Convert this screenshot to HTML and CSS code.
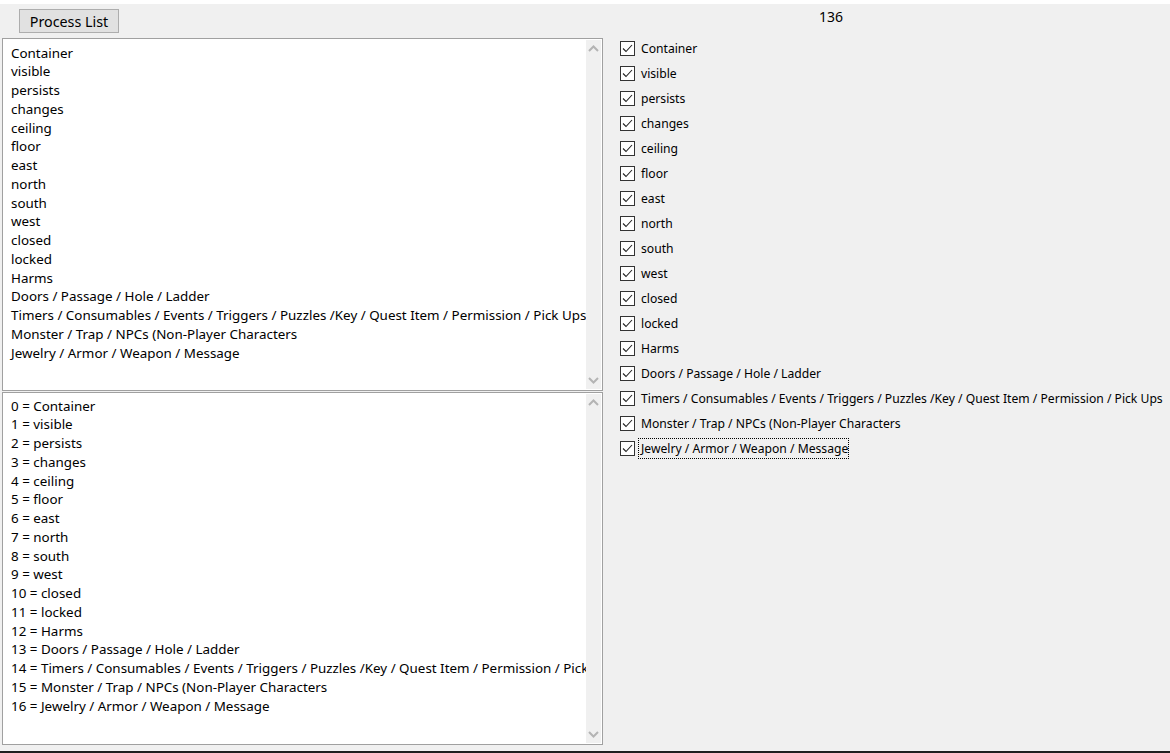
FILE: index.html
```html
<!DOCTYPE html>
<html lang="en">
<head>
    <meta charset="UTF-8">
    <meta name="viewport" content="width=device-width, initial-scale=1.0">
    <title>Process List</title>
    <link rel="stylesheet" href="styles.css">
</head>
<body>

    <div class="window">
        <div class="topbar">
            <button class="btn">Process List</button>
            <span class="count">136</span>
        </div>

        <div class="main">
            <div class="lists">
                <div class="listbox top-box">
                    <div class="items">
                        <div>Container</div>
                        <div>visible</div>
                        <div>persists</div>
                        <div>changes</div>
                        <div>ceiling</div>
                        <div>floor</div>
                        <div>east</div>
                        <div>north</div>
                        <div>south</div>
                        <div>west</div>
                        <div>closed</div>
                        <div>locked</div>
                        <div>Harms</div>
                        <div>Doors / Passage / Hole / Ladder</div>
                        <div>Timers / Consumables / Events / Triggers / Puzzles /Key / Quest Item / Permission / Pick Ups</div>
                        <div>Monster / Trap / NPCs (Non-Player Characters</div>
                        <div>Jewelry / Armor / Weapon / Message</div>
                    </div>
                    <div class="scrollbar">
                        <svg width="11" height="7" viewBox="0 0 11 7"><path d="M1 6 L5.5 1.5 L10 6" fill="none" stroke="#b4b4b4" stroke-width="2"/></svg>
                        <svg width="11" height="7" viewBox="0 0 11 7"><path d="M1 1 L5.5 5.5 L10 1" fill="none" stroke="#b4b4b4" stroke-width="2"/></svg>
                    </div>
                </div>

                <div class="listbox bottom-box">
                    <div class="items">
                        <div>0 = Container</div>
                        <div>1 = visible</div>
                        <div>2 = persists</div>
                        <div>3 = changes</div>
                        <div>4 = ceiling</div>
                        <div>5 = floor</div>
                        <div>6 = east</div>
                        <div>7 = north</div>
                        <div>8 = south</div>
                        <div>9 = west</div>
                        <div>10 = closed</div>
                        <div>11 = locked</div>
                        <div>12 = Harms</div>
                        <div>13 = Doors / Passage / Hole / Ladder</div>
                        <div>14 = Timers / Consumables / Events / Triggers / Puzzles /Key / Quest Item / Permission / Pick Ups</div>
                        <div>15 = Monster / Trap / NPCs (Non-Player Characters</div>
                        <div>16 = Jewelry / Armor / Weapon / Message</div>
                    </div>
                    <div class="scrollbar">
                        <svg width="11" height="7" viewBox="0 0 11 7"><path d="M1 6 L5.5 1.5 L10 6" fill="none" stroke="#b4b4b4" stroke-width="2"/></svg>
                        <svg width="11" height="7" viewBox="0 0 11 7"><path d="M1 1 L5.5 5.5 L10 1" fill="none" stroke="#b4b4b4" stroke-width="2"/></svg>
                    </div>
                </div>
            </div>

            <div class="checks" id="checks"></div>
        </div>
    </div>

    <div class="taskbar"></div>

    <script>
    const names = [
        "Container", "visible", "persists", "changes", "ceiling", "floor",
        "east", "north", "south", "west", "closed", "locked", "Harms",
        "Doors / Passage / Hole / Ladder",
        "Timers / Consumables / Events / Triggers / Puzzles /Key / Quest Item / Permission / Pick Ups",
        "Monster / Trap / NPCs (Non-Player Characters",
        "Jewelry / Armor / Weapon / Message"
    ];
    const checks = document.getElementById('checks');

    names.forEach((name, i) => {
        const row = document.createElement('label');
        row.className = 'check-row';
        row.innerHTML =
            '<span class="box"><svg width="13" height="13" viewBox="0 0 13 13">' +
            '<path d="M2 6.5 L5 9.5 L11 3" fill="none" stroke="#222" stroke-width="1.1"/></svg></span>' +
            '<span class="check-text">' + name + '</span>';
        if (i === names.length - 1) {
            row.querySelector('.check-text').classList.add('focused');
        }
        checks.appendChild(row);
    });
    </script>

</body>
</html>
```

FILE: styles.css
```css
body {
    margin: 0;
    background-color: #f0f0f0;
    font-family: "Noto Sans", "Open Sans", sans-serif;
    color: #000;
    height: 753px;
    overflow: hidden;
}

.window {
    border-top: 4px solid #fff;
    height: 747px;
    box-sizing: border-box;
}

.topbar {
    height: 31px;
    display: flex;
    align-items: flex-start;
}

.btn {
    margin-top: 5px;
    margin-left: 19px;
    width: 100px;
    height: 24px;
    background-color: #e1e1e1;
    border: 1px solid #adadad;
    font-family: inherit;
    font-size: 14.3px;
    color: #000;
    padding: 0;
}

.count {
    margin-left: 700px;
    margin-top: 3px;
    font-size: 14px;
}

.main {
    display: flex;
}

.lists {
    margin-left: 2px;
    padding-top: 3px;
    width: 601px;
    display: flex;
    flex-direction: column;
    gap: 1px;
}

.listbox {
    border: 1px solid #a0a0a0;
    background-color: #fff;
    display: flex;
    box-sizing: border-box;
    height: 353px;
}

.items {
    flex: 1;
    overflow: hidden;
    white-space: nowrap;
    padding: 4.5px 0 0 8px;
    font-size: 13.4px;
    line-height: 18.75px;
}

.bottom-box .items {
    padding-top: 3.5px;
}

.scrollbar {
    width: 15px;
    margin: 1px 1px 1px 0;
    background-color: #f0f0f0;
    display: flex;
    flex-direction: column;
    justify-content: space-between;
    align-items: center;
    padding: 5px 0;
}

.checks {
    margin-left: 17px;
    padding-top: 1px;
    display: flex;
    flex-direction: column;
}

.check-row {
    height: 25px;
    display: flex;
    align-items: center;
    font-size: 12.15px;
    white-space: nowrap;
}

.box {
    width: 13px;
    height: 13px;
    border: 1px solid #333;
    background-color: #fff;
    display: flex;
    margin-right: 3px;
}

.check-text {
    padding: 1px 0 1px 2px;
    border: 1px solid transparent;
}

.check-text.focused {
    border: 1px dotted #000;
}

.taskbar {
    position: absolute;
    left: 0;
    right: 0;
    bottom: 0;
    height: 2px;
    background-color: #1e1e1e;
}
```
